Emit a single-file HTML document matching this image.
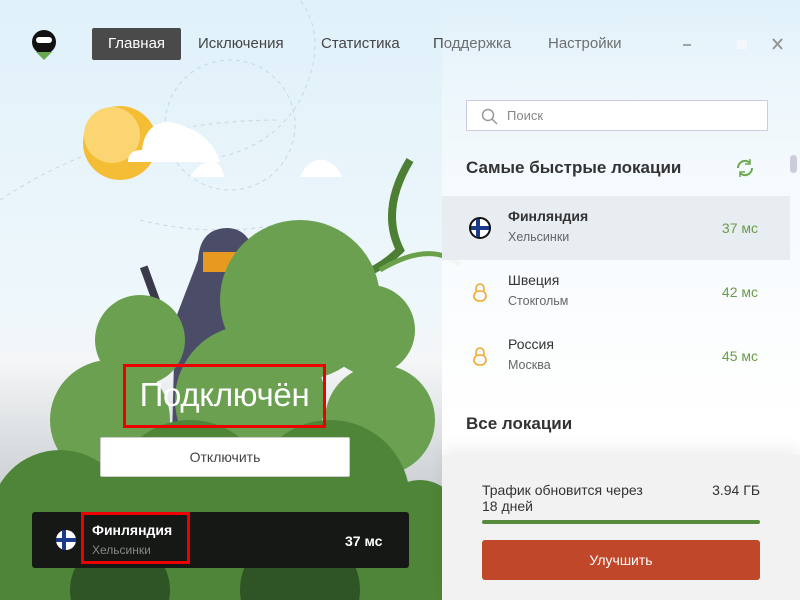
<!DOCTYPE html>
<html><head><meta charset="utf-8"><style>
*{margin:0;padding:0;box-sizing:border-box}
html,body{width:800px;height:600px;overflow:hidden}
body{position:relative;font-family:"Liberation Sans","DejaVu Sans",sans-serif;background:#e3f2fa}
.bg{position:absolute;left:0;top:0;width:800px;height:600px;background:linear-gradient(#e0f1fa 0,#eef7fb 300px,#f4f6f7 360px,#cfd3d6 480px,#9a9fa2 600px)}
.nav div{position:absolute;top:28px;height:32px;line-height:32px;font-size:15px;color:#444}
.nav .act{left:92px;width:89px;background:#4a4a4a;color:#fff;border-radius:2px;text-align:center}
.panel{position:absolute;left:442px;top:0;width:358px;height:600px;background:linear-gradient(rgba(240,247,252,.0) 0,rgba(245,250,253,.9) 170px,#fff 420px)}
.search{position:absolute;left:466px;top:100px;width:302px;height:31px;background:#fff;border:1px solid #ccd;font-size:13px;color:#888;line-height:30px;padding-left:40px}
.h{position:absolute;font-weight:bold;font-size:17px;color:#333}
.row{position:absolute;left:442px;width:348px;height:64px}
.row .n{position:absolute;left:66px;top:12px;font-size:14px;color:#333}
.row .c{position:absolute;left:66px;top:34px;font-size:12.5px;color:#666}
.row .p{position:absolute;right:32px;top:24px;font-size:14px;color:#6a9a4a}
.bottom{position:absolute;left:442px;top:455px;width:358px;height:145px;background:#f2f2f2;box-shadow:0 -8px 14px rgba(0,0,0,.06)}
</style></head><body>
<div class="bg"></div>
<svg style="position:absolute;left:0;top:0" width="800" height="600">
<path d="M0 200 Q120 120 280 120" stroke="#c5d8e2" stroke-dasharray="4 4" fill="none"/>
<circle cx="230" cy="125" r="65" stroke="#c5d8e2" stroke-dasharray="4 4" fill="none"/>
<path d="M150 160 Q260 170 300 100 Q330 40 300 0" stroke="#c5d8e2" stroke-dasharray="4 4" fill="none"/>
<path d="M140 220 Q220 240 300 220" stroke="#c5d8e2" stroke-dasharray="4 4" fill="none"/>
<circle cx="120" cy="143" r="37" fill="#f5bd36"/><circle cx="112" cy="135" r="28" fill="#fad572"/>
<path d="M128 162 Q128 150 142 150 Q145 122 170 122 Q210 130 220 162 Z" fill="#fff"/>
<path d="M190 177 Q200 160 215 162 Q222 165 224 177 Z" fill="#fff"/>
<path d="M300 177 Q308 158 325 160 Q338 165 342 177 Z" fill="#fff"/>
<path d="M410 160 Q380 210 400 250 Q380 270 350 280" stroke="#4c7f34" stroke-width="8" fill="none"/>
<path d="M380 270 Q430 240 460 265" stroke="#6aa04a" stroke-width="5" fill="none"/>
<rect x="150" y="265" width="8" height="60" fill="#3a3a4a" transform="rotate(-20 154 295)"/>
<path d="M198 260 Q200 228 228 228 Q256 230 254 270 L260 330 L250 520 L170 520 L175 320 Z" fill="#4b4c67"/>
<rect x="203" y="252" width="44" height="20" fill="#e89a20"/>
<g fill="#6ba050">
<circle cx="140" cy="340" r="45"/><circle cx="300" cy="300" r="80"/><circle cx="370" cy="330" r="45"/>
<circle cx="250" cy="400" r="75"/><circle cx="380" cy="420" r="55"/><circle cx="110" cy="420" r="60"/>
</g>
<g fill="#4f8538"><circle cx="60" cy="520" r="70"/><circle cx="190" cy="500" r="80"/><circle cx="330" cy="500" r="80"/><circle cx="420" cy="520" r="40"/>
<rect x="0" y="520" width="442" height="80"/></g>
<g fill="#2f5526"><circle cx="120" cy="590" r="50"/><circle cx="300" cy="590" r="60"/></g>
<circle cx="44" cy="42" r="12" fill="#111"/><rect x="36" y="37" width="16" height="6" rx="3" fill="#fff"/><path d="M36 52 L44 60 L52 52 Z" fill="#6aa84f"/>
<path d="M683 45h8" stroke="#888" stroke-width="2"/><rect x="737" y="40" width="10" height="9" fill="#f4f8fa"/>
<path d="M773 39l9 10M782 39l-9 10" stroke="#777" stroke-width="2"/>
</svg>
<div class="nav"><div class="act">Главная</div><div style="left:198px">Исключения</div><div style="left:321px">Статистика</div><div style="left:433px">Поддержка</div><div style="left:548px">Настройки</div></div>
<div class="panel"></div>
<div class="search">Поиск</div>
<svg style="position:absolute;left:480px;top:107px" width="20" height="20"><circle cx="8" cy="8" r="5.5" stroke="#999" stroke-width="1.5" fill="none"/><path d="M12 12l5 5" stroke="#999" stroke-width="1.5"/></svg>
<div class="h" style="left:466px;top:158px">Самые быстрые локации</div>
<svg style="position:absolute;left:734px;top:157px" width="22" height="22"><path d="M4 11a7 7 0 0 1 12-5M18 11a7 7 0 0 1-12 5" stroke="#6aa84f" stroke-width="2" fill="none"/><path d="M16 2v5h-5M6 20v-5h5" stroke="#6aa84f" stroke-width="1.5" fill="none"/></svg>
<div style="position:absolute;left:790px;top:155px;width:7px;height:18px;border-radius:4px;background:#ccd"></div>
<div class="row" style="top:196px;background:#e8edf2"><svg style="position:absolute;left:26px;top:20px" width="24" height="24"><circle cx="12" cy="12" r="10" fill="#fff" stroke="#111" stroke-width="2"/><rect x="3" y="10" width="18" height="4" fill="#1a3a8a"/><rect x="8" y="3" width="4" height="18" fill="#1a3a8a"/></svg><div class="n" style="font-weight:bold">Финляндия</div><div class="c">Хельсинки</div><div class="p">37 мс</div></div>
<div class="row" style="top:260px"><svg style="position:absolute;left:28px;top:22px" width="20" height="22"><path d="M6 9V6a4 4 0 0 1 8 0v3" stroke="#f0a830" stroke-width="1.6" fill="none"/><rect x="4" y="9" width="12" height="10" rx="5" stroke="#f0a830" stroke-width="1.6" fill="none"/></svg><div class="n">Швеция</div><div class="c">Стокгольм</div><div class="p">42 мс</div></div>
<div class="row" style="top:324px"><svg style="position:absolute;left:28px;top:22px" width="20" height="22"><path d="M6 9V6a4 4 0 0 1 8 0v3" stroke="#f0a830" stroke-width="1.6" fill="none"/><rect x="4" y="9" width="12" height="10" rx="5" stroke="#f0a830" stroke-width="1.6" fill="none"/></svg><div class="n">Россия</div><div class="c">Москва</div><div class="p">45 мс</div></div>
<div class="h" style="left:466px;top:414px">Все локации</div>
<div class="bottom">
<div style="position:absolute;left:40px;top:27px;font-size:14px;color:#333;line-height:16px">Трафик обновится через<br>18 дней</div>
<div style="position:absolute;right:40px;top:27px;font-size:14px;color:#333">3.94 ГБ</div>
<div style="position:absolute;left:40px;top:65px;width:278px;height:4px;background:#558b3a;border-radius:2px"></div>
<div style="position:absolute;left:40px;top:85px;width:278px;height:40px;background:#c0472a;border-radius:3px;color:#fff;text-align:center;line-height:40px;font-size:14px">Улучшить</div>
</div>
<div style="position:absolute;left:123px;top:364px;width:203px;height:64px;border:3px solid #e00;color:#fff;font-size:33px;line-height:56px;text-align:center;white-space:nowrap;letter-spacing:-.3px">Подключён</div>
<div style="position:absolute;left:100px;top:437px;width:250px;height:40px;background:#fff;border:1px solid #ccc;border-radius:2px;text-align:center;line-height:38px;font-size:14px;color:#444">Отключить</div>
<div style="position:absolute;left:32px;top:512px;width:377px;height:56px;background:#151815;border-radius:3px"></div>
<svg style="position:absolute;left:55px;top:529px" width="22" height="22"><circle cx="11" cy="11" r="10" fill="#fff"/><rect x="1" y="9" width="20" height="4" fill="#1a3a8a"/><rect x="7" y="1" width="4" height="20" fill="#1a3a8a"/></svg>
<div style="position:absolute;left:81px;top:512px;width:109px;height:52px;border:3px solid #e00"></div>
<div style="position:absolute;left:92px;top:522px;font-size:14px;font-weight:bold;color:#fff">Финляндия</div>
<div style="position:absolute;left:92px;top:543px;font-size:12px;color:#888">Хельсинки</div>
<div style="position:absolute;left:345px;top:533px;font-size:14px;font-weight:bold;color:#fff">37 мс</div>
</body></html>
